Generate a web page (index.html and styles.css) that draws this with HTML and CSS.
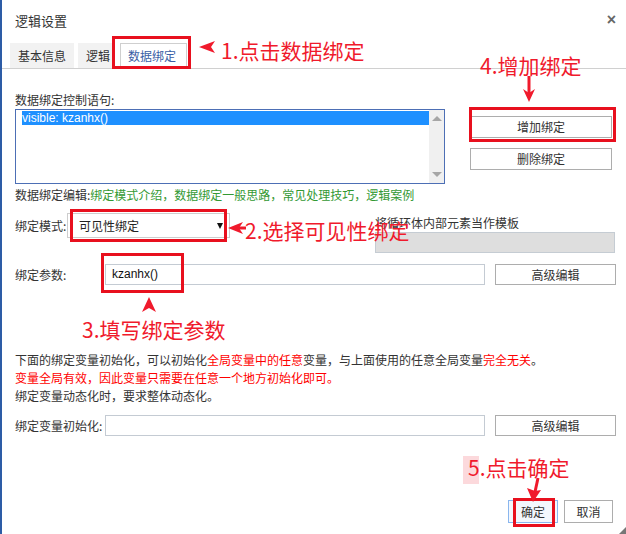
FILE: index.html
```html
<!DOCTYPE html>
<html lang="zh-CN">

<head>
    <meta charset="UTF-8">
    <title>逻辑设置</title>
    <link rel="stylesheet" href="styles.css">
</head>

<body>
    <div class="dialog">
        <div class="dlg-head">
            <span class="dlg-title">逻辑设置</span>
            <span class="dlg-close">×</span>
        </div>

        <div class="tabs">
            <span class="tab">基本信息</span>
            <span class="tab tab-short">逻辑</span>
            <span class="tab active">数据绑定</span>
        </div>

        <div class="content">
            <div class="bind-top">
                <div>
                    <div class="lbl">数据绑定控制语句:</div>
                    <div class="listbox">
                        <div class="list-items">
                            <div class="list-item sel">visible: kzanhx()</div>
                        </div>
                        <div class="vscroll">
                            <span class="arr-up"></span>
                            <span class="arr-down"></span>
                        </div>
                    </div>
                </div>
                <div class="bind-btns">
                    <button class="btn">增加绑定</button>
                    <button class="btn">删除绑定</button>
                </div>
            </div>

            <div class="edit-links">数据绑定编辑:<span class="green">绑定模式介绍，数据绑定一般思路，常见处理技巧，逻辑案例</span></div>

            <div class="mode-row">
                <span class="mode-lbl">绑定模式:</span>
                <div class="select">可见性绑定<span class="caret"></span></div>
                <div class="tpl">
                    <div class="tpl-text">将循环体内部元素当作模板</div>
                    <div class="tpl-box"></div>
                </div>
            </div>

            <div class="field-row param-row">
                <span class="field-lbl">绑定参数:</span>
                <div class="input">kzanhx()</div>
                <button class="btn btn-adv">高级编辑</button>
            </div>

            <div class="note">
                <div>下面的绑定变量初始化，可以初始化<span class="red">全局变量中的任意</span>变量，与上面使用的任意全局变量<span class="red">完全无关</span>。</div>
                <div class="red">变量全局有效，因此变量只需要在任意一个地方初始化即可。</div>
                <div>绑定变量动态化时，要求整体动态化。</div>
            </div>

            <div class="field-row init-row">
                <span class="field-lbl">绑定变量初始化:</span>
                <div class="input"></div>
                <button class="btn btn-adv">高级编辑</button>
            </div>

            <div class="footer">
                <button class="btn btn-ok">确定</button>
                <button class="btn btn-cancel">取消</button>
            </div>
        </div>

        <!-- annotations drawn on top of the dialog -->
        <span class="mark mark-tab"></span>
        <span class="mark mark-add"></span>
        <span class="mark mark-mode"></span>
        <span class="mark mark-param"></span>
        <span class="mark mark-ok"></span>

        <span class="hint-bg"></span>
        <span class="hint hint-1">1.点击数据绑定</span>
        <span class="hint hint-2">2.选择可见性绑定</span>
        <span class="hint hint-3">3.填写绑定参数</span>
        <span class="hint hint-4">4.增加绑定</span>
        <span class="hint hint-5">5.点击确定</span>

        <svg class="arrows" width="626" height="534" viewBox="0 0 626 534">
            <polygon points="199,47 215,41 211,47 215,53" />
            <line x1="238" y1="228" x2="246" y2="228" />
            <polygon points="228,228 243,222 239,228 243,234" />
            <polygon points="149,297 156,312 149,308 142,312" />
            <line x1="529" y1="76" x2="529" y2="93" />
            <polygon points="529,102 523,89 529,93 535,89" />
            <line x1="538" y1="478" x2="535" y2="492" />
            <polygon points="533,502 527,488 535,491 541,490" />
        </svg>

        <span class="grip"></span>
    </div>
</body>

</html>
```

FILE: styles.css
```css
* {
    box-sizing: border-box;
}

html,
body {
    margin: 0;
    padding: 0;
}

body {
    width: 626px;
    height: 534px;
    overflow: hidden;
    background-color: #fff;
    font-family: "Noto Sans CJK SC", "Liberation Sans", sans-serif;
    font-size: 12px;
    color: #333;
}

.dialog {
    position: relative;
    height: 534px;
    padding-left: 2px;
    box-shadow: inset 2px 0 0 #2d5ca6;
}

.dlg-head {
    height: 43px;
    display: flex;
    justify-content: space-between;
    align-items: flex-start;
    padding: 11px 10px 0 13px;
}

.dlg-title {
    font-size: 13px;
    line-height: 20px;
}

.dlg-close {
    font-family: "Liberation Sans", sans-serif;
    font-weight: bold;
    font-size: 16px;
    line-height: 16px;
    color: #666;
    margin-top: 1px;
}

/* tabs */
.tabs {
    display: flex;
    align-items: flex-end;
    height: 26px;
    padding-left: 8px;
    border-bottom: 1px solid #d0d0d0;
}

.tab {
    height: 25px;
    line-height: 25px;
    padding: 0 8px;
    margin-right: 4px;
    background-color: #f2f2f2;
    color: #333;
}

.tab-short {
    padding: 0 3px 0 8px;
    margin-right: 7px;
}

.tab.active {
    background-color: #fff;
    border: 1px solid #cfcfcf;
    border-bottom: none;
    color: #3a5ea5;
    padding: 0 10px 0 7px;
    line-height: 24px;
}

.content {
    padding: 23px 10px 0 13px;
}

.lbl {
    line-height: 16px;
    margin-bottom: 1px;
}

/* binding list */
.bind-top {
    display: grid;
    grid-template-columns: 430px 142px;
    column-gap: 25px;
}

.listbox {
    display: flex;
    height: 75px;
    border: 1px solid #4d6fb5;
}

.list-items {
    flex: 1;
    padding: 1px 0 0 6px;
}

.list-item {
    font-family: "Liberation Sans", sans-serif;
    font-size: 12px;
    line-height: 14px;
    height: 14px;
}

.list-item.sel {
    background-color: #1e90ff;
    color: #fff;
}

.vscroll {
    width: 15px;
    background-color: #f0f0f0;
    display: flex;
    flex-direction: column;
    justify-content: space-between;
    align-items: center;
    padding: 6px 0 6px;
}

.arr-up {
    width: 0;
    height: 0;
    border-left: 5px solid transparent;
    border-right: 5px solid transparent;
    border-bottom: 5px solid #a6a6a6;
}

.arr-down {
    width: 0;
    height: 0;
    border-left: 5px solid transparent;
    border-right: 5px solid transparent;
    border-top: 5px solid #a6a6a6;
}

.bind-btns {
    display: flex;
    flex-direction: column;
    gap: 10px;
    padding-top: 24px;
}

.btn {
    height: 22px;
    padding: 0;
    background-color: #fff;
    border: 1px solid #adadad;
    border-radius: 0;
    font-family: "Noto Sans CJK SC", sans-serif;
    font-size: 12px;
    color: #333;
    line-height: 20px;
}

.edit-links {
    margin-top: 3px;
    line-height: 16px;
}

.green {
    color: #339933;
}

.red {
    color: #f00;
}

/* mode row */
.mode-row {
    display: flex;
    align-items: flex-start;
    margin-top: 10px;
}

.mode-lbl {
    width: 52px;
    line-height: 25px;
}

.select {
    width: 163px;
    height: 25px;
    border: 1px solid #cdcdcd;
    display: flex;
    align-items: center;
    justify-content: space-between;
    padding: 0 6px 0 11px;
    line-height: 23px;
    color: #222;
}

.caret {
    width: 0;
    height: 0;
    border-left: 3px solid transparent;
    border-right: 3px solid transparent;
    border-top: 6px solid #111;
}

.tpl {
    margin-left: 145px;
    width: 240px;
    padding-top: 2px;
}

.tpl-text {
    line-height: 16px;
}

.tpl-box {
    margin-top: 1px;
    height: 21px;
    background-color: #dedede;
    border: 1px solid #c5ccd3;
}

/* input rows */
.field-row {
    display: flex;
    align-items: center;
}

.param-row {
    margin-top: 11px;
}

.init-row {
    margin-top: 10px;
}

.field-lbl {
    width: 90px;
}

.input {
    width: 380px;
    height: 21px;
    border: 1px solid #c4cbd3;
    padding-left: 6px;
    font-family: "Liberation Sans", sans-serif;
    font-size: 12px;
    line-height: 19px;
    color: #111;
}

.btn-adv {
    width: 121px;
    height: 21px;
    margin-left: 10px;
    line-height: 19px;
}

.note {
    margin-top: 66px;
    line-height: 18px;
}

.footer {
    display: flex;
    justify-content: flex-end;
    gap: 6px;
    margin-top: 64px;
    padding-right: 3px;
}

.btn-ok {
    width: 50px;
    height: 23px;
    background-color: #f3f7fd;
    border-color: #8ab6ee;
}

.btn-cancel {
    width: 49px;
    height: 23px;
}

/* red annotation frames */
.mark {
    position: absolute;
    border: 3px solid #e8101e;
}

.mark-tab {
    left: 112px;
    top: 36px;
    width: 79px;
    height: 33px;
}

.mark-add {
    left: 469px;
    top: 107px;
    width: 147px;
    height: 35px;
}

.mark-mode {
    left: 70px;
    top: 209px;
    width: 157px;
    height: 33px;
}

.mark-param {
    left: 101px;
    top: 253px;
    width: 83px;
    height: 40px;
}

.mark-ok {
    left: 513px;
    top: 498px;
    width: 42px;
    height: 29px;
}

.hint {
    position: absolute;
    font-family: "Noto Sans CJK SC", sans-serif;
    font-size: 21px;
    line-height: 24px;
    color: #f01a2c;
    white-space: nowrap;
}

.hint-1 {
    left: 221px;
    top: 38px;
}

.hint-2 {
    left: 245px;
    top: 218px;
}

.hint-3 {
    left: 82px;
    top: 317px;
}

.hint-4 {
    left: 480px;
    top: 53px;
}

.hint-5 {
    left: 468px;
    top: 455px;
}

.hint-bg {
    position: absolute;
    left: 463px;
    top: 456px;
    width: 16px;
    height: 28px;
    background-color: #fcd9dc;
}

.arrows {
    position: absolute;
    left: 0;
    top: 0;
    pointer-events: none;
}

.arrows polygon {
    fill: #f01a2c;
}

.arrows line {
    stroke: #f01a2c;
    stroke-width: 3;
}

.grip {
    position: absolute;
    right: 0;
    bottom: 0;
    width: 0;
    height: 0;
    border-left: 7px solid transparent;
    border-bottom: 7px solid #777;
}
```
